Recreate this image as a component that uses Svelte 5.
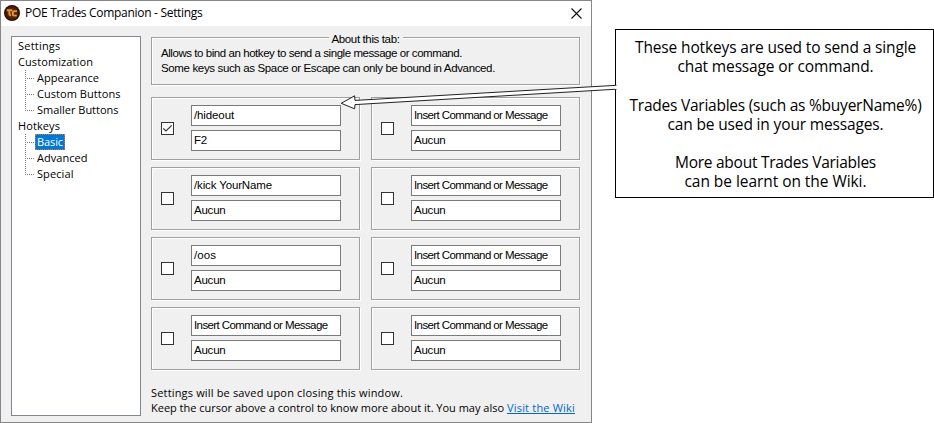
<script>
  const tree = [
    { label: 'Settings', w: 42.5 },
    { label: 'Customization', w: 75 },
    { label: 'Appearance', w: 62, child: true },
    { label: 'Custom Buttons', w: 83.5, child: true },
    { label: 'Smaller Buttons', w: 81.5, child: true, last: true },
    { label: 'Hotkeys', w: 42 },
    { label: 'Basic', w: 26, child: true, selected: true },
    { label: 'Advanced', w: 50.5, child: true },
    { label: 'Special', w: 36.5, child: true, last: true },
  ];
  const insert = { text: 'Insert Command or Message', w: 133.5 };
  const none = { text: 'Aucun', w: 31.5 };
  const hotkeys = [
    { on: true, command: { text: '/hideout', w: 40 }, key: { text: 'F2', w: 13 } },
    { command: insert, key: none },
    { command: { text: '/kick YourName', w: 78 }, key: none },
    { command: insert, key: none },
    { command: { text: '/oos', w: 22 }, key: none },
    { command: insert, key: none },
    { command: insert, key: none },
    { command: insert, key: none },
  ];
  const note = [
    ['These hotkeys are used to send a single', 281],
    ['chat message or command.', 196],
    null,
    ['Trades Variables (such as %buyerName%)', 292],
    ['can be used in your messages.', 216],
    null,
    ['More about Trades Variables', 201],
    ['can be learnt on the Wiki.', 182],
  ];

  // Spreads the letters so that a label takes the given width.
  function fit(node, width) {
    const natural = node.getBoundingClientRect().width;
    node.style.letterSpacing = `${(width - natural) / node.textContent.length}px`;
  }
</script>

<div class="stage">
  <section class="window">
    <header>
      <svg class="logo" width="16" height="16" viewBox="0 0 16 16">
        <defs>
          <radialGradient id="coin">
            <stop offset="0" stop-color="#7a3608" />
            <stop offset=".65" stop-color="#552006" />
            <stop offset="1" stop-color="#1d0b06" />
          </radialGradient>
        </defs>
        <circle cx="8" cy="8" r="8" fill="url(#coin)" />
        <path d="M2.8 5.2H8.3M5.4 5.2V9.2Q5.4 10.4 7 10.4" fill="none" stroke="#e0983c" stroke-width="1.9" />
        <path d="M13 6.2H10.4Q8.8 6.2 8.8 7.6V9Q8.8 10.6 10.4 10.6H12.8" fill="none" stroke="#e0983c" stroke-width="1.8" />
      </svg>
      <h1><span use:fit={177.5}>POE Trades Companion - Settings</span></h1>
      <svg class="close" width="11" height="11" viewBox="0 0 11 11">
        <path d="M.5 .5L10.5 10.5M10.5 .5L.5 10.5" stroke="#111" stroke-width="1.1" />
      </svg>
    </header>
    <div class="body">
      <nav>
        {#each tree as item}
          <div class="item" class:child={item.child} class:last={item.last}>
            {#if item.child}<i></i>{/if}
            <b class:selected={item.selected}><span use:fit={item.w}>{item.label}</span></b>
          </div>
        {/each}
      </nav>
      <main>
        <div class="group about">
          <div class="legend"><span use:fit={68}>About this tab:</span></div>
          <p><span use:fit={301}>Allows to bind an hotkey to send a single message or command.</span></p>
          <p><span use:fit={334}>Some keys such as Space or Escape can only be bound in Advanced.</span></p>
        </div>
        <div class="grid">
          {#each hotkeys as h}
            <div class="group hotkey">
              <div class="check">
                {#if h.on}
                  <svg width="11" height="11" viewBox="0 0 11 11"><path d="M1.3 5.3L4 8L9.7 2.3" fill="none" stroke="#333" stroke-width="1.2" /></svg>
                {/if}
              </div>
              <div class="fields">
                <div class="field"><span use:fit={h.command.w}>{h.command.text}</span></div>
                <div class="field"><span use:fit={h.key.w}>{h.key.text}</span></div>
              </div>
            </div>
          {/each}
        </div>
        <footer>
          <p><span use:fit={252}>Settings will be saved upon closing this window.</span></p>
          <p>
            <span use:fit={353}>Keep the cursor above a control to know more about it. You may also</span>
            <a href="#wiki"><span use:fit={68}>Visit the Wiki</span></a>
          </p>
        </footer>
      </main>
    </div>
  </section>
  <aside>
    {#each note as line}
      <p>{#if line}<span use:fit={line[1]}>{line[0]}</span>{/if}</p>
    {/each}
  </aside>
  <svg class="arrow" width="934" height="423" viewBox="0 0 934 423">
    <path d="M616.5 85.3L355 100.4L354.6 95.8L341.2 103.3L354.6 108.8L355 104.6L616.5 89.2" fill="#fff" stroke="#222" stroke-width="1" />
    <path d="M615.9 85.9V88.7" stroke="#fff" stroke-width="2.4" />
  </svg>
</div>

<style>
  :global(body) { background: #fff; }
  * { box-sizing: border-box; }
  p, h1 { margin: 0; font-weight: normal; }
  span { white-space: pre; }
  .stage {
    position: relative;
    display: flex;
    align-items: flex-start;
    width: 934px;
    height: 423px;
    overflow: hidden;
    color: #000;
    font-family: "Open Sans", "Noto Sans", sans-serif;
  }
  .window {
    display: flex;
    flex-direction: column;
    width: 592px;
    height: 423px;
    border: 1px solid #868686;
    background: #f0f0f0;
    font-size: 11px;
  }
  header {
    display: flex;
    flex: none;
    align-items: flex-start;
    height: 25px;
    padding: 4px 9px 0 3px;
    background: #fff;
  }
  h1 { flex: 1; margin-left: 5px; font-size: 12px; line-height: 16px; }
  .close { margin-top: 3px; }
  .body { display: flex; flex: none; gap: 10px; padding: 10px 10px 0; }
  nav {
    width: 130px;
    height: 380px;
    padding: 1px 0 0 6px;
    border: 1px solid #828790;
    background: #fff;
  }
  .item { display: flex; height: 16px; line-height: 16px; }
  .item b { font-weight: normal; height: 16px; }
  .child { padding-left: 7px; }
  .child b { padding: 0 2px; }
  .child i {
    width: 10px;
    height: 16px;
    background:
      repeating-linear-gradient(to bottom, #808080 0 1px, transparent 1px 2px) 0 0 / 1px 16px no-repeat,
      repeating-linear-gradient(to right, #808080 0 1px, transparent 1px 2px) 0 8px / 9px 1px no-repeat;
  }
  .last i { background-size: 1px 9px, 9px 1px; }
  .selected {
    color: #fff;
    background: #0078d7;
    outline: 1px dotted #d87820;
    outline-offset: -1px;
  }
  main { width: 429px; padding-top: 1px; }
  .group {
    border: 1px solid #a0a0a0;
    box-shadow: inset 1px 1px #fff, 1px 1px #fff;
    font-family: "Liberation Sans", Arial, sans-serif;
    font-size: 11.5px;
  }
  .about { height: 48px; padding: 0 9px; line-height: 15px; }
  .legend {
    width: 74px;
    height: 10px;
    margin: -6px auto 4px;
    padding-left: 3px;
    background: #f0f0f0;
    line-height: 14px;
  }
  .grid {
    display: grid;
    grid-template-columns: 209px 209px;
    column-gap: 11px;
    row-gap: 7px;
    margin-top: 12px;
  }
  .hotkey { display: flex; height: 63px; padding: 7px 0 0 9px; }
  .check {
    width: 13px;
    height: 13px;
    margin: 17px 17px 0 0;
    border: 1px solid #333;
    background: #fff;
  }
  .check svg { display: block; }
  .fields { display: flex; flex-direction: column; gap: 4px; }
  .field {
    width: 150px;
    height: 21px;
    padding-left: 2px;
    border: 1px solid #7a7a7a;
    background: #fff;
    line-height: 19px;
  }
  footer { margin-top: 15px; line-height: 15px; }
  footer p { display: flex; gap: 3px; }
  a { color: #0066cc; text-decoration: none; height: 14px; border-bottom: 1px solid #0066cc; }
  aside {
    width: 319px;
    height: 169px;
    margin: 29px 0 0 23px;
    padding: 8px 0 0 2px;
    border: 1px solid #000;
    background: #fff;
    text-align: center;
    font-size: 15.5px;
    line-height: 19.2px;
  }
  aside p { height: 19.2px; }
  aside span { display: inline-block; height: 19px; line-height: 19px; vertical-align: top; }
  .arrow { position: absolute; left: 0; top: 0; pointer-events: none; }
</style>
